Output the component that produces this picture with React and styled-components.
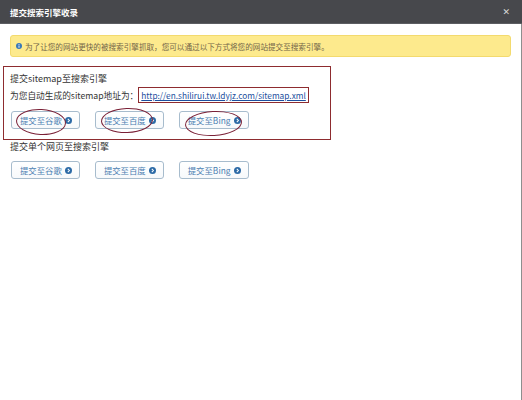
import styled, { createGlobalStyle } from "styled-components";

const GlobalStyle = createGlobalStyle`
    html, body {
        margin: 0;
        padding: 0;
        background: #ffffff;
    }
    body {
        font-family: "Noto Sans CJK SC", "Noto Sans", sans-serif;
        color: #333;
    }
`;

const Dialog = styled.div`
    width: 522px;
    height: 400px;
    display: flex;
    flex-direction: column;
    box-sizing: border-box;
`;

const Header = styled.div`
    height: 24px;
    flex-shrink: 0;
    background-color: #47484c;
    display: flex;
    align-items: center;
    justify-content: space-between;
    padding: 0 10px;
    border-bottom: 1px solid #5c5d62;
    box-sizing: border-box;
`;

const Title = styled.h1`
    margin: 0;
    font-size: 8.5px;
    font-weight: 700;
    color: #ffffff;
    letter-spacing: 0;
`;

const Close = styled.span`
    font-family: "DejaVu Sans", sans-serif;
    font-size: 9px;
    color: #d8d8d8;
    margin-right: 2px;
`;

const Body = styled.div`
    flex: 1;
    padding: 11px 10px 0 10px;
    border-right: 1px solid #8e8e8e;
`;

const Alert = styled.div`
    height: 22px;
    box-sizing: border-box;
    background-color: #fdea8d;
    border: 1px solid #f3da6e;
    border-radius: 3px;
    display: flex;
    align-items: center;
    gap: 3px;
    padding: 0 5px;
    font-size: 7.6px;
    color: #736548;
`;

const Highlight = styled.div`
    width: 328px;
    box-sizing: border-box;
    margin: 9px 0 0 -7px;
    padding: 5px 6px 10px 6px;
    border: 1.5px solid #8e2c2f;
`;

const Heading = styled.div`
    font-size: 9px;
    line-height: 14px;
    color: #333;
    white-space: nowrap;
    margin-top: ${(p) => p.$top || 0}px;
`;

const UrlLine = styled.div`
    display: flex;
    align-items: center;
    font-size: 8.7px;
    height: 16px;
    margin-top: 1px;
    color: #333;
    white-space: nowrap;
`;

const UrlBox = styled.span`
    display: inline-flex;
    align-items: center;
    flex-shrink: 0;
    height: 16px;
    box-sizing: border-box;
    border: 1.5px solid #8e2c2f;
    padding: 0 2px;
    a {
        color: #1d4f9e;
        text-decoration: underline;
        font-size: 8.3px;
    }
`;

const ButtonRow = styled.div`
    display: flex;
    gap: 15px;
    margin-top: ${(p) => p.$top}px;
    padding-left: 1px;
`;

const Slot = styled.div`
    position: relative;
    display: flex;
`;

const Button = styled.button`
    height: 18px;
    box-sizing: border-box;
    display: flex;
    align-items: center;
    gap: 3px;
    padding: 0 7px 0 8px;
    background: linear-gradient(#ffffff, #f7f9fb);
    border: 1px solid #a7bccd;
    border-radius: 3px;
    font-family: "Noto Sans CJK SC", "Noto Sans", sans-serif;
    font-size: 8.4px;
    color: #4a7db1;
    white-space: nowrap;
    cursor: pointer;
`;

const Ring = styled.span`
    position: absolute;
    left: ${(p) => p.$left}px;
    top: ${(p) => p.$top}px;
    width: ${(p) => p.$w}px;
    height: ${(p) => p.$h}px;
    border: 1.5px solid #7a2036;
    border-radius: 50%;
    transform: rotate(${(p) => p.$rot || 0}deg);
    pointer-events: none;
`;

function InfoIcon() {
    return (
        <svg width="6" height="6" viewBox="0 0 12 12">
            <circle cx="6" cy="6" r="6" fill="#3a78b8" />
            <rect x="5.1" y="5" width="1.8" height="4.5" fill="#fff" />
            <circle cx="6" cy="3.2" r="1" fill="#fff" />
        </svg>
    );
}

function GoIcon() {
    return (
        <svg width="7" height="7" viewBox="0 0 12 12">
            <circle cx="6" cy="6" r="6" fill="#2c6aa6" />
            <path d="M4.8 3.3 L7.5 6 L4.8 8.7" stroke="#fff" strokeWidth="1.8" fill="none" />
        </svg>
    );
}

const engines = ["提交至谷歌", "提交至百度", "提交至Bing"];

const rings = [
    { $left: 5, $top: -2, $w: 48, $h: 24, $rot: 3 },
    { $left: 6, $top: -3, $w: 50, $h: 23, $rot: -2 },
    { $left: 6, $top: 0, $w: 55, $h: 23, $rot: -3 },
];

function Buttons({ top, marked }) {
    return (
        <ButtonRow $top={top}>
            {engines.map((name, i) => (
                <Slot key={name}>
                    <Button type="button">
                        {name}
                        <GoIcon />
                    </Button>
                    {marked && <Ring {...rings[i]} />}
                </Slot>
            ))}
        </ButtonRow>
    );
}

function App() {
    return (
        <>
            <GlobalStyle />
            <Dialog>
                <Header>
                    <Title>提交搜索引擎收录</Title>
                    <Close>✕</Close>
                </Header>
                <Body>
                    <Alert>
                        <InfoIcon />
                        <span>为了让您的网站更快的被搜索引擎抓取，您可以通过以下方式将您的网站提交至搜索引擎。</span>
                    </Alert>
                    <Highlight>
                        <Heading>提交sitemap至搜索引擎</Heading>
                        <UrlLine>
                            <span>为您自动生成的sitemap地址为：</span>
                            <UrlBox>
                                <a href="#sitemap">http://en.shilirui.tw.ldyjz.com/sitemap.xml</a>
                            </UrlBox>
                        </UrlLine>
                        <Buttons top={8} marked />
                    </Highlight>
                    <Heading $top={0}>提交单个网页至搜索引擎</Heading>
                    <Buttons top={7} />
                </Body>
            </Dialog>
        </>
    );
}

export default App;
